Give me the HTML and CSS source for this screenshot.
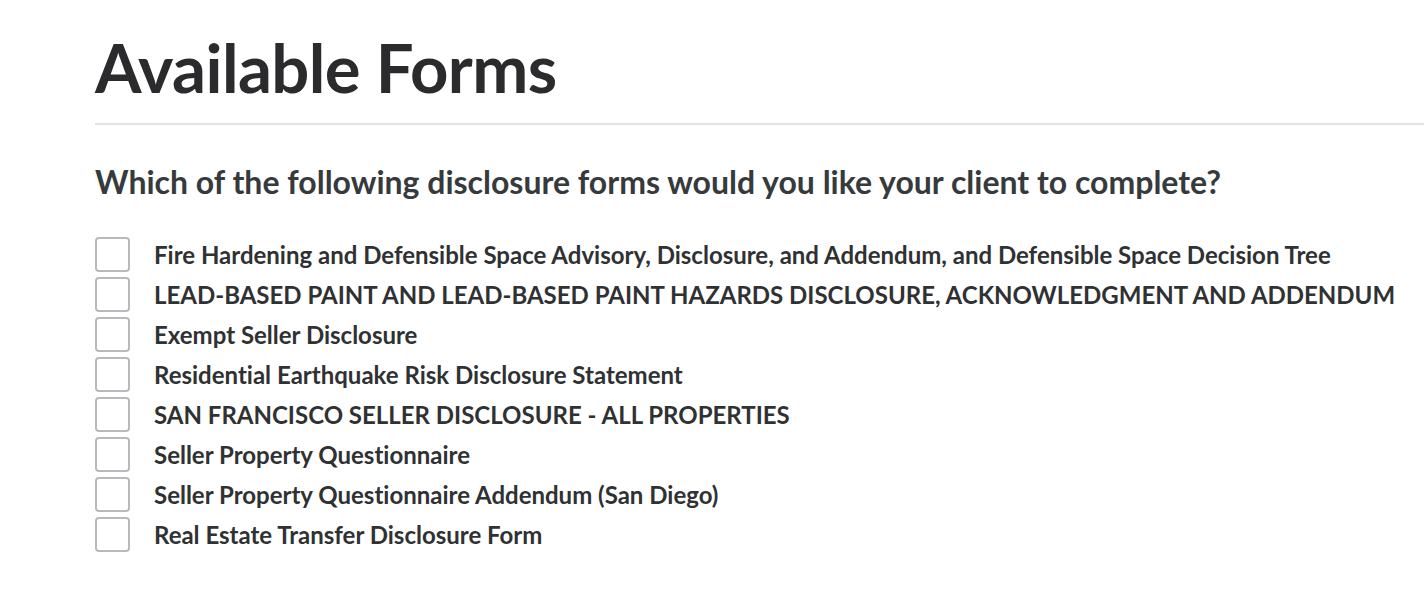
FILE: index.html
```
<!DOCTYPE html>
<html lang="en">
  <head>
    <meta charset="UTF-8" />
    <meta name="viewport" content="width=device-width, initial-scale=1.0" />
    <title>Available Forms</title>
    <link rel="stylesheet" href="styles.css">
  </head>

  <body>
    <div class="page">
      <h1 class="title">Available Forms</h1>
      <hr class="divider" />

      <form class="forms">
        <h2 class="question">Which of the following disclosure forms would you like your client to complete?</h2>

        <ul class="form-list">
          <li>
            <label class="form-item">
              <input type="checkbox" name="forms" value="fire-hardening" />
              <span class="box"></span>
              <span class="name">Fire Hardening and Defensible Space Advisory, Disclosure, and Addendum, and Defensible Space Decision Tree</span>
            </label>
          </li>
          <li>
            <label class="form-item">
              <input type="checkbox" name="forms" value="lead-based-paint" />
              <span class="box"></span>
              <span class="name">LEAD-BASED PAINT AND LEAD-BASED PAINT HAZARDS DISCLOSURE, ACKNOWLEDGMENT AND ADDENDUM</span>
            </label>
          </li>
          <li>
            <label class="form-item">
              <input type="checkbox" name="forms" value="exempt-seller" />
              <span class="box"></span>
              <span class="name">Exempt Seller Disclosure</span>
            </label>
          </li>
          <li>
            <label class="form-item">
              <input type="checkbox" name="forms" value="earthquake" />
              <span class="box"></span>
              <span class="name">Residential Earthquake Risk Disclosure Statement</span>
            </label>
          </li>
          <li>
            <label class="form-item">
              <input type="checkbox" name="forms" value="sf-seller" />
              <span class="box"></span>
              <span class="name">SAN FRANCISCO SELLER DISCLOSURE - ALL PROPERTIES</span>
            </label>
          </li>
          <li>
            <label class="form-item">
              <input type="checkbox" name="forms" value="spq" />
              <span class="box"></span>
              <span class="name">Seller Property Questionnaire</span>
            </label>
          </li>
          <li>
            <label class="form-item">
              <input type="checkbox" name="forms" value="spq-san-diego" />
              <span class="box"></span>
              <span class="name">Seller Property Questionnaire Addendum (San Diego)</span>
            </label>
          </li>
          <li>
            <label class="form-item">
              <input type="checkbox" name="forms" value="tds" />
              <span class="box"></span>
              <span class="name">Real Estate Transfer Disclosure Form</span>
            </label>
          </li>
        </ul>
      </form>
    </div>
  </body>
</html>
```

FILE: styles.css
```
body {
  font-family: Lato, "Open Sans", Arial, sans-serif;
  font-variant-ligatures: no-common-ligatures;
  background-color: #fff;
  color: #2f3133;
  margin: 0;
}

.page {
  padding: 25px 0 0 95px;
}

.title {
  font-family: Lato, Arial, sans-serif;
  font-size: 67px;
  font-weight: 700;
  line-height: 84px;
  color: #2b2b2d;
  margin: 0;
  letter-spacing: -0.6px;
}

.divider {
  border: none;
  border-top: 2px solid #e2e1e6;
  margin: 14px 0 0;
}

.question {
  font-size: 32px;
  font-weight: 700;
  line-height: 40px;
  color: #363a3d;
  margin: 37px 0 0;
}

.form-list {
  list-style-type: none;
  padding: 0;
  margin: 32px 0 0;
}

.form-item {
  display: flex;
  align-items: center;
  height: 40px;
  cursor: pointer;
}

.form-item input {
  display: none;
}

.box {
  box-sizing: border-box;
  width: 35px;
  height: 35px;
  border: 2px solid #b9b9bd;
  border-radius: 4px;
  flex-shrink: 0;
  margin-right: 24px;
}

.form-item input:checked + .box {
  background-color: #2f3133;
}

.name {
  font-size: 24px;
  font-weight: 700;
  color: #2f3133;
}
```
